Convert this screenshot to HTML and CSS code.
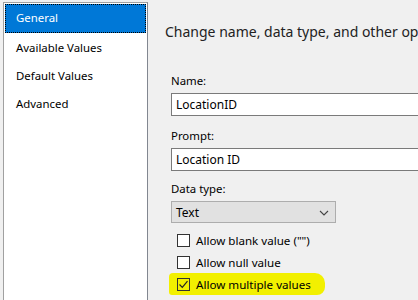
FILE: index.html
```html
<!DOCTYPE html>
<html lang="en">
<head>
    <meta charset="UTF-8">
    <title>Parameter Properties</title>
    <link rel="stylesheet" href="styles.css">
</head>
<body>
    <div class="dialog">
        <ul class="side-nav">
            <li class="nav-item active">General</li>
            <li class="nav-item">Available Values</li>
            <li class="nav-item">Default Values</li>
            <li class="nav-item">Advanced</li>
        </ul>

        <div class="page">
            <h1 class="page-title">Change name, data type, and other options.</h1>

            <div class="form">
                <label class="field-label" for="name">Name:</label>
                <input class="text-input" id="name" type="text" value="LocationID">

                <label class="field-label" for="prompt">Prompt:</label>
                <input class="text-input" id="prompt" type="text" value="Location ID">

                <label class="field-label">Data type:</label>
                <div class="select">
                    <span>Text</span>
                    <svg class="chevron" width="10" height="6" viewBox="0 0 10 6">
                        <path d="M1 1 L5 5 L9 1" fill="none" stroke="#444" stroke-width="1.1"/>
                    </svg>
                </div>

                <div class="checks">
                    <div class="check-row">
                        <span class="box"></span>
                        <span>Allow blank value ("")</span>
                    </div>
                    <div class="check-row">
                        <span class="box"></span>
                        <span>Allow null value</span>
                    </div>
                    <div class="check-row marked">
                        <span class="box">
                            <svg width="11" height="11" viewBox="0 0 11 11">
                                <path d="M1.5 5.5 L4.3 8.3 L9.5 2.2" fill="none" stroke="#222" stroke-width="1.2"/>
                            </svg>
                        </span>
                        <span>Allow multiple values</span>
                    </div>
                </div>
            </div>
        </div>
    </div>
</body>
</html>
```

FILE: styles.css
```css
html, body {
    margin: 0;
    padding: 0;
    height: 100%;
    overflow: hidden;
}
body {
    font-family: "Segoe UI", "Noto Sans", Arial, sans-serif;
    font-size: 11.4px;
    background-color: #f0f0f0;
    color: #000;
}
.dialog {
    display: flex;
    height: 100%;
}
.side-nav {
    list-style: none;
    margin: 2px 0 0 3px;
    padding: 1px;
    width: 141px;
    flex-shrink: 0;
    background-color: #fff;
    border-top: 1px solid #a0a0a0;
    border-left: 1px solid #a0a0a0;
    border-right: 1px solid #828790;
}
.nav-item {
    height: 28px;
    line-height: 28px;
    padding-left: 11px;
    white-space: nowrap;
}
.nav-item.active {
    height: 27px;
    line-height: 25px;
    margin-bottom: 1px;
    padding-left: 10px;
    background-color: #0078d7;
    color: #fff;
    border: 1px dotted #000;
}
.page {
    flex: 1;
    min-width: 0;
    overflow: hidden;
}
.page-title {
    margin: 21px 0 0 17px;
    font-size: 14px;
    font-weight: normal;
    line-height: 22px;
    color: #222;
    white-space: nowrap;
}
.form {
    padding: 30px 0 0 23px;
}
.field-label {
    display: block;
    line-height: 16px;
    margin-bottom: 4px;
}
.text-input {
    display: block;
    box-sizing: border-box;
    width: 300px;
    height: 23px;
    margin: 0 0 12px;
    padding: 0 4px;
    border: 1px solid #7a7a7a;
    background-color: #fff;
    font: inherit;
    font-size: 12px;
}
.text-input:nth-of-type(2) {
    margin-bottom: 10px;
}
.select {
    display: flex;
    align-items: center;
    justify-content: space-between;
    box-sizing: border-box;
    width: 165px;
    height: 22px;
    padding: 0 6px 0 4px;
    background-color: #e1e1e1;
    border: 1px solid #adadad;
    font-size: 12px;
}
.chevron {
    margin-top: 1px;
}
.checks {
    margin-top: 6px;
    padding-left: 6px;
}
.check-row {
    display: flex;
    align-items: center;
    gap: 6px;
    height: 22px;
    font-size: 11.6px;
}
.box {
    display: flex;
    align-items: center;
    justify-content: center;
    box-sizing: border-box;
    width: 13px;
    height: 13px;
    background-color: #fff;
    border: 1px solid #333;
}
.check-row.marked {
    margin-left: -8px;
    padding: 0 14px 0 8px;
    width: fit-content;
    background-color: #f2f000;
    border-radius: 4px 10px 8px 3px;
}
.check-row.marked .box {
    background-color: transparent;
}
```
